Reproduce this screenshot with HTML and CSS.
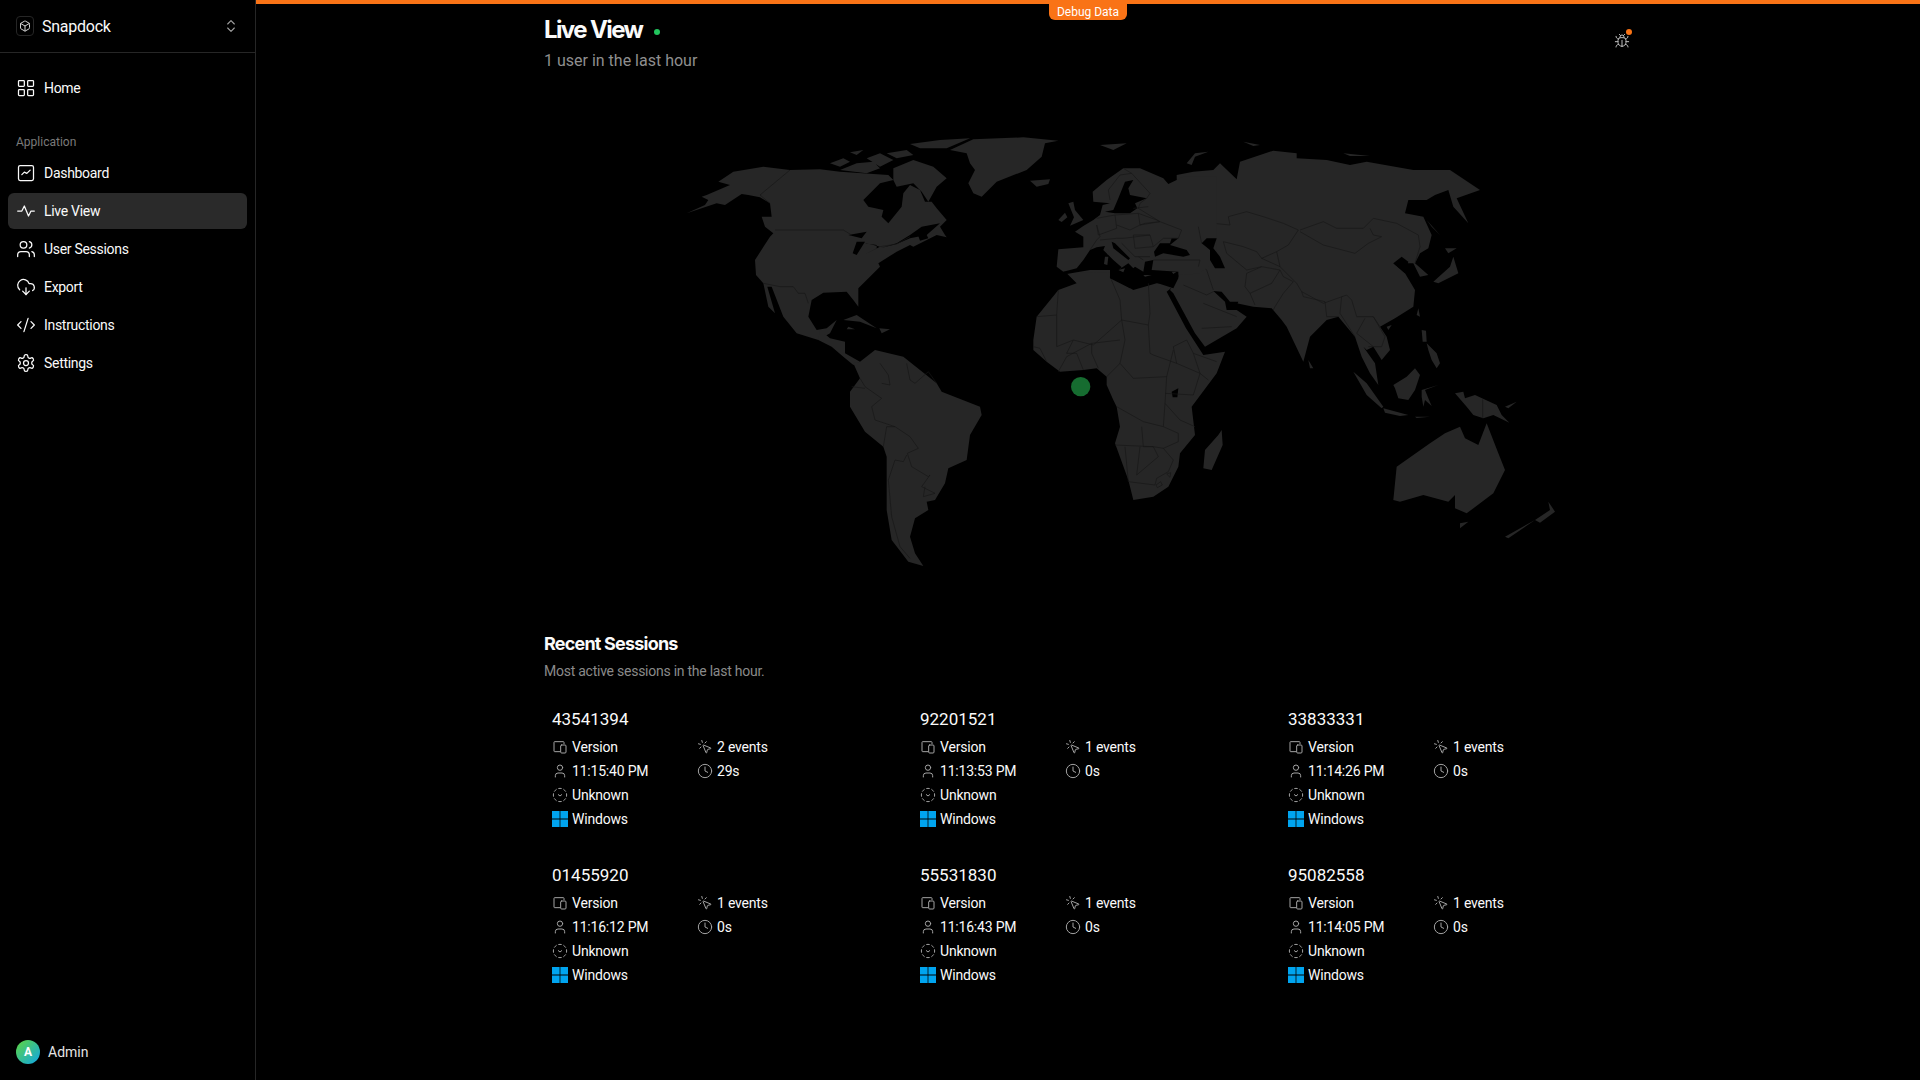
FILE: index.html

```html
<!DOCTYPE html>
<html lang="en">
<head>
    <meta charset="UTF-8">
    <title>Live View - Snapdock</title>
    <link rel="stylesheet" href="styles.css">
</head>
<body>

    <svg class="sprite" xmlns="http://www.w3.org/2000/svg">
        <symbol id="i-box" viewBox="0 0 24 24"><path d="M21 8a2 2 0 0 0-1-1.73l-7-4a2 2 0 0 0-2 0l-7 4A2 2 0 0 0 3 8v8a2 2 0 0 0 1 1.73l7 4a2 2 0 0 0 2 0l7-4A2 2 0 0 0 21 16Z"/><path d="m3.3 7 8.7 5 8.7-5"/><path d="M12 22V12"/></symbol>
        <symbol id="i-updown" viewBox="0 0 24 24"><path d="m7 15 5 5 5-5"/><path d="m7 9 5-5 5 5"/></symbol>
        <symbol id="i-grid" viewBox="0 0 24 24"><rect x="3" y="3" width="7" height="7" rx="1"/><rect x="14" y="3" width="7" height="7" rx="1"/><rect x="14" y="14" width="7" height="7" rx="1"/><rect x="3" y="14" width="7" height="7" rx="1"/></symbol>
        <symbol id="i-chart" viewBox="0 0 24 24"><rect x="3" y="3" width="18" height="18" rx="2"/><path d="m7 14 3-3 3 1.500 4-4"/></symbol>
        <symbol id="i-activity" viewBox="0 0 24 24"><path d="M22 12h-4l-3 6L10 6l-3 6H2"/></symbol>
        <symbol id="i-users" viewBox="0 0 24 24"><path d="M16 21v-2a4 4 0 0 0-4-4H6a4 4 0 0 0-4 4v2"/><circle cx="9" cy="7" r="4"/><path d="M22 21v-2a4 4 0 0 0-3-3.87"/><path d="M16 3.13a4 4 0 0 1 0 7.75"/></symbol>
        <symbol id="i-cloud" viewBox="0 0 24 24"><path d="M12 13v8"/><path d="m8 17 4 4 4-4"/><path d="M4.393 15.269A7 7 0 1 1 15.71 8h1.79a4.5 4.5 0 0 1 2.436 8.284"/></symbol>
        <symbol id="i-code" viewBox="0 0 24 24"><path d="m18 16 4-4-4-4"/><path d="m6 8-4 4 4 4"/><path d="m14.5 4-5 16"/></symbol>
        <symbol id="i-settings" viewBox="0 0 24 24"><path d="M12.22 2h-.44a2 2 0 0 0-2 2v.18a2 2 0 0 1-1 1.73l-.43.25a2 2 0 0 1-2 0l-.15-.08a2 2 0 0 0-2.73.73l-.22.38a2 2 0 0 0 .73 2.73l.15.1a2 2 0 0 1 1 1.72v.51a2 2 0 0 1-1 1.74l-.15.09a2 2 0 0 0-.73 2.73l.22.38a2 2 0 0 0 2.73.73l.15-.08a2 2 0 0 1 2 0l.43.25a2 2 0 0 1 1 1.73V20a2 2 0 0 0 2 2h.44a2 2 0 0 0 2-2v-.18a2 2 0 0 1 1-1.73l.43-.25a2 2 0 0 1 2 0l.15.08a2 2 0 0 0 2.73-.73l.22-.39a2 2 0 0 0-.73-2.73l-.15-.08a2 2 0 0 1-1-1.74v-.5a2 2 0 0 1 1-1.74l.15-.09a2 2 0 0 0 .73-2.73l-.22-.38a2 2 0 0 0-2.73-.73l-.15.08a2 2 0 0 1-2 0l-.43-.25a2 2 0 0 1-1-1.73V4a2 2 0 0 0-2-2z"/><circle cx="12" cy="12" r="3"/></symbol>
        <symbol id="i-bug" viewBox="0 0 24 24"><path d="m8 2 1.88 1.88"/><path d="M14.12 3.88 16 2"/><path d="M9 7.13v-1a3.003 3.003 0 1 1 6 0v1"/><path d="M12 20c-3.3 0-6-2.7-6-6v-3a4 4 0 0 1 4-4h4a4 4 0 0 1 4 4v3c0 3.3-2.7 6-6 6"/><path d="M12 20v-9"/><path d="M6.53 9C4.6 8.8 3 7.1 3 5"/><path d="M6 13H2"/><path d="M3 21c0-2.1 1.700-3.900 3.800-4"/><path d="M20.97 5c0 2.100-1.600 3.800-3.500 4"/><path d="M22 13h-4"/><path d="M17.2 17c2.100.1 3.800 1.900 3.800 4"/></symbol>
        <symbol id="i-devices" viewBox="0 0 24 24"><path d="M18 7V5a1 1 0 0 0-1-1H4a1 1 0 0 0-1 1v13a1 1 0 0 0 1 1h8"/><rect x="13" y="9" width="8" height="12" rx="1.5"/></symbol>
        <symbol id="i-click" viewBox="0 0 24 24"><path d="M14 4.1 12 6"/><path d="m5.1 8-2.9-.8"/><path d="m6 12-1.9 2"/><path d="M7.2 2.2 8 5.1"/><path d="M9.037 9.69a.498.498 0 0 1 .653-.653l11 4.5a.5.5 0 0 1-.074.949l-4.349 1.041a1 1 0 0 0-.74.739l-1.04 4.35a.5.5 0 0 1-.95.074z"/></symbol>
        <symbol id="i-user" viewBox="0 0 24 24"><path d="M19 21v-2a4 4 0 0 0-4-4H9a4 4 0 0 0-4 4v2"/><circle cx="12" cy="7" r="4"/></symbol>
        <symbol id="i-clock" viewBox="0 0 24 24"><circle cx="12" cy="12" r="10"/><path d="M12 6v6l4 2"/></symbol>
        <symbol id="i-unknown" viewBox="0 0 24 24"><path d="M10.1 2.182a10 10 0 0 1 3.8 0"/><path d="M13.9 21.818a10 10 0 0 1-3.8 0"/><path d="M17.609 3.721a10 10 0 0 1 2.69 2.7"/><path d="M2.182 13.9a10 10 0 0 1 0-3.8"/><path d="M20.279 17.609a10 10 0 0 1-2.7 2.69"/><path d="M21.818 10.1a10 10 0 0 1 0 3.8"/><path d="M3.721 6.391a10 10 0 0 1 2.7-2.69"/><path d="M6.391 20.279a10 10 0 0 1-2.69-2.7"/><path d="m9.5 11.5 2.500 2 2.500-2"/></symbol>
        <symbol id="i-windows" viewBox="0 0 16 16"><path class="win" d="M0 0h7.600v7.600H0zM8.400 0H16v7.600H8.400zM0 8.400h7.600V16H0zM8.400 8.400H16V16H8.400z"/></symbol>
    </svg>

    <div class="app">
        <aside class="sidebar">
            <div class="brand">
                <span class="brand-logo"><svg class="icon icon-12"><use href="#i-box"/></svg></span>
                <span class="brand-name">Snapdock</span>
                <svg class="icon brand-switch"><use href="#i-updown"/></svg>
            </div>

            <nav class="nav">
                <a class="nav-item"><svg class="icon"><use href="#i-grid"/></svg>Home</a>
                <div class="nav-label">Application</div>
                <a class="nav-item"><svg class="icon"><use href="#i-chart"/></svg>Dashboard</a>
                <a class="nav-item active"><svg class="icon"><use href="#i-activity"/></svg>Live View</a>
                <a class="nav-item"><svg class="icon"><use href="#i-users"/></svg>User Sessions</a>
                <a class="nav-item"><svg class="icon"><use href="#i-cloud"/></svg>Export</a>
                <a class="nav-item"><svg class="icon"><use href="#i-code"/></svg>Instructions</a>
                <a class="nav-item"><svg class="icon"><use href="#i-settings"/></svg>Settings</a>
            </nav>

            <div class="account">
                <span class="avatar">A</span>
                <span>Admin</span>
            </div>
        </aside>

        <main class="main">
            <div class="debug-bar"></div>
            <div class="debug-tab">Debug Data</div>

            <div class="content">
                <header class="page-head">
                    <div>
                        <h1>Live View <span class="live-dot"></span></h1>
                        <p class="page-sub">1 user in the last hour</p>
                    </div>
                    <span class="bug">
                        <svg class="icon"><use href="#i-bug"/></svg>
                        <span class="bug-dot"></span>
                    </span>
                </header>

                <svg class="map" viewBox="0 0 3312 1560" xmlns="http://www.w3.org/2000/svg">
                    <!-- americas, greenland -->
                    <g transform="translate(408 90)">
                        <path class="land" d="M20 280 75 255 85 240 65 230 80 225 150 195 115 185 160 155 250 140 330 150 420 148 480 155 625 165 640 180 600 190 550 240 565 260 610 270 605 290 625 310 665 260 670 220 690 195 720 210 735 245 755 245 770 265 800 300 780 320 795 345 800 352 770 345 700 380 690 375 650 395 595 430 600 440 535 505 535 560 520 540 500 515 430 518 395 540 385 590 410 630 440 625 470 600 450 640 415 660 350 640 310 590 275 500 262 500 285 580 265 560 250 490 228 465 225 420 270 350 280 340 255 320 245 290 275 290 270 250 240 232 205 225 185 222 135 255 110 250Z"/>
                        <path class="land" d="M450 130 490 115 510 125 480 140ZM510 97 550 90 530 105ZM480 150 530 130 580 125 600 145 560 160ZM560 115 600 100 640 120 600 140ZM690 72 780 60 870 55 800 85 720 85ZM640 145 700 120 760 140 800 175 770 200 745 245 725 215 700 190 650 200 640 180ZM620 100 680 90 700 105 650 115Z"/>
                        <path class="land" d="M810 90 880 58 1030 52 1135 62 1095 70 1085 110 1040 150 950 185 905 230 880 220 865 190 885 150 870 130 860 100Z"/>
                        <path class="land" d="M1050 182 1110 178 1105 192 1070 200Z"/>
                        <path class="land" d="M490 600 530 585 590 625 540 605ZM598 625 630 628 605 640ZM505 620 525 628 500 628Z"/>
                        <path class="sea" d="M505 345 560 335 545 355ZM530 365 555 365 530 405 518 400ZM555 370 590 375 590 385 555 403 600 380 560 370ZM600 385 650 370 690 345 725 320 780 310 740 345 690 355 650 372Z"/>
                        <path class="sea" d="M712 340 735 335 745 355 720 362Z"/>
                        <path class="border" d="M330 150 240 225 270 250M285 330H490L515 345M250 490 300 500 340 500 355 520 375 520 385 550M600 380 650 372 690 350"/>
                    </g>
                    <g transform="translate(828 690)">
                        <path class="land" d="M0 30 30 55 75 65 75 100 120 125 100 135 70 110 35 80-5 60Z"/>
                        <path class="land" d="M100 130 120 125 165 90 250 110 350 190 365 215 480 260 485 285 450 345 440 420 385 445 375 490 345 540 320 545 325 570 285 595 270 650 285 700 310 738 265 725 215 660 200 570 200 410 190 380 135 335 90 260 90 215 120 175Z"/>
                        <path class="border" d="M120 175 135 200 185 235 155 260 165 300 195 310 225 320 270 350 295 385 262 400 275 440 325 470 330 465 305 500 345 520M190 380 200 320 225 320M260 405 250 425 225 420 205 480 215 590 240 680 270 715M185 190 210 195 205 165 180 130M135 205 95 200M260 130 270 180 285 190 325 155 350 190M315 500 310 530 345 520"/>
                        <!-- africa -->
                        <path class="land" d="M740-140 770-110 715-90 650-10 640 60 640 90 680 125 720 155 790 150 830 145 860 170 860 195 880 240 890 260 900 320 885 370 925 480 940 540 1000 530 1045 500 1075 440 1080 400 1125 345 1115 260 1190 160 1215 95 1150 105 1098 25 1040-85 1070-110 1010-110 940-90 870-130 880-150 840-155 780-150Z"/>
                        <path class="land" d="M1205 330 1208 375 1175 450 1150 445 1155 390 1195 345Z"/>
                        <path class="sea" d="M1055 215 1075 205 1072 232 1058 232Z"/>
                        <path class="border" d="M650-10 710-15 715-90M710-15 710 80 760 60 820 75 905 0 900-60 870-130M905 0 985 15 990-20 985-110M985 15 990 100 1000 105 1070 130 1060 80 1100 60 1120 100 1190 125M900 60 815 70 815 100 835 145M815 70 740 110 715 155M760 60 740 100 770 100 790 150M680 125 660 85 640 80M905 0 915 60 900 130 860 170M900 130 940 175 1040 170 1060 90M1040 170 1035 250 1030 320 970 305 890 260M1035 250 1080 300 1125 320M1030 320 1075 340 1075 365 1030 385 1000 380 885 375M965 320 970 380 1000 380 1015 410 950 465 960 380M1030 385 1060 420 1045 455 1010 475 1005 495 925 485 915 380M1120 100 1140 160 1120 225 1035 220M1070 130 1140 160 1165 180"/>
                        <path class="border" d="M1008 495 1022 485 1027 495 1012 503ZM1040 462 1052 458 1050 472Z"/>
                    </g>
                    <!-- asia -->
                    <g transform="translate(1608 90)">
                        <path class="land" d="M290 165 340 155 400 150 420 130 470 178 480 125 580 92 650 100 650 115 740 120 810 135 860 125 1000 150 1110 150 1200 210 1130 235 1165 310 1120 260 1105 210 1065 225 1040 240 985 240 975 280 1030 290 1055 345 1045 385 1020 400 1005 430 1045 465 1020 470 1000 430 960 430 940 430 975 460 1005 510 1000 560 945 595 900 620 920 650 930 690 905 720 880 680 860 690 850 680 885 730 895 795 870 760 845 710 825 650 775 590 740 600 690 650 670 725 620 620 605 600 575 565 520 560 470 550 440 570 400 515 440 570 470 570 500 590 470 625 375 680 345 640 280 520 270 510 295 470 295 452Z"/>
                        <path class="sea" d="M940 430 965 410 985 425 975 460Z"/>
                        <path class="border" d="M355 320 380 308 450 315 445 290 500 275 550 290 610 310 655 330 625 375 590 395 545 415 530 395 490 380 430 365 440 400M660 330 730 305 770 325 850 325 880 295 950 310 1015 345 1020 380 1005 430M660 335 730 375 825 400 865 370 905 350 880 345 870 325M600 440 650 490 665 515 730 550 800 525 815 540 830 590 880 590 900 620M600 450 610 470 640 485 610 520 585 560 580 570M500 460 545 440 600 450 575 490 510 520M360 430 380 450 400 510M500 460 495 500 510 520 525 555M440 400 500 450 545 440M590 395 600 440 545 415M665 515 670 530 735 545 740 590 775 590M785 530 780 580 825 650M855 595 830 640 880 680M880 590 915 650 905 680 865 680M310 495 380 525 400 515M370 550 470 590M365 625 455 620"/>
                        <path class="land" d="M60 75 140 70 100 90ZM490 65 540 75 520 78ZM320 130 345 100 385 95 345 110 335 135ZM790 100 870 108 810 108ZM1040 300 1080 345 1055 320ZM1095 385 1130 385 1105 400ZM1120 410 1135 460 1075 490 1060 485 1110 440ZM685 720 700 745 690 745ZM1015 565 1020 590 1010 585ZM920 620 935 615 925 630Z"/>
                    </g>
                    <!-- europe, middle east -->
                    <g transform="translate(1518 210)">
                        <path class="land" d="M25 268 100 262 100 230 75 215 100 198 130 180 150 165 158 135 180 130 130 125 128 95 170 60 220 25 270 25 340 55 355 72 400 50 500 50 500 300 450 340 400 345 305 340 40 335 20 320Z"/>
                        <path class="land" d="M55 130 70 125 75 150 100 180 60 197 72 172ZM25 180 45 158 52 172 35 186Z"/>
                        <path class="sea" d="M40 335 80 325 100 300 120 270 140 262 165 258 160 270 190 300 215 322 205 330 235 310 250 325 255 320 280 335 285 305 310 300 305 330 385 335 385 355 370 385 310 365 260 375 240 385 180 355 180 330 165 330 120 330 50 342Z"/>
                        <path class="sea" d="M165 155 190 150 205 115 225 65 250 60 235 85 240 105 290 115 255 130 262 145 240 160 195 160ZM185 245 195 250 240 295 235 300 190 265Z"/>
                        <path class="sea" d="M312 275 330 250 360 250 365 235 385 235 360 255 410 270 420 285 400 290 340 280 315 290ZM455 250 470 235 500 235 490 265 510 290 525 325 495 325 480 300 480 270Z"/>
                        <path class="sea" d="M490 393 515 395 540 425 565 425 555 450 530 450 525 425Z"/>
                        <path class="land" d="M205 330 225 325 220 337ZM165 290 175 290 172 315 162 312ZM168 268 176 268 172 285ZM280 345 305 345 285 350ZM365 335 380 335 370 342Z"/>
                        <path class="border" d="M120 270 140 240 150 230 140 195M140 175 195 165 200 205 145 225 140 195M195 165 265 160 270 195 240 210 200 195M265 160 320 180 330 185 285 190 270 195M270 195 330 185 395 210 385 235 340 235 310 260 300 225 250 225M290 115 270 130 265 145 330 185M250 145 295 140M220 25 245 40 300 100 290 115M180 120 175 90 210 45 245 40M150 240 200 235 220 235 300 225M215 250 255 290 300 290M250 225 255 265 310 260M310 300 450 300 445 320M455 250 445 200M265 290 280 300"/>
                    </g>
                    <!-- se asia, oceania -->
                    <g transform="translate(2268 630)">
                        <path class="land" d="M160 215 200 250 250 320 245 325 200 285ZM250 325 325 345 300 348 255 338ZM345 350 390 350 350 354ZM280 255 320 230 345 205 360 225 345 270 325 300 295 295 285 265ZM365 270 415 255 375 270 385 295 395 318 375 300 370 320 365 290ZM365 90 378 92 380 125 368 125ZM380 130 410 160 420 190 410 205 395 180 385 150ZM465 280 490 275 495 295 525 285 590 315 605 345 628 368 580 345 550 355 520 345 500 320ZM615 320 650 305 625 325Z"/>
                        <path class="border" d="M548 298V355"/>
                    </g>
                    <g transform="translate(2508 870)">
                        <path class="land" d="M40 360 50 260 150 190 195 160 240 140 255 175 295 195 320 130 355 220 375 270 340 340 260 400 225 385 225 345 205 365 130 345 60 365Z"/>
                        <path class="land" d="M240 430 265 425 240 445ZM505 365 525 395 480 428 465 420 510 390ZM465 420 385 475 375 470Z"/>
                    </g>
                    <circle class="marker" cx="1610" cy="890" r="29"/>
                </svg>

                <section class="recent">
                    <h2>Recent Sessions</h2>
                    <p class="recent-sub">Most active sessions in the last hour.</p>

                    <div class="sessions">
                        <article class="session">
                            <h3>43541394</h3>
                            <div class="session-info">
                                <div class="info"><svg class="icon"><use href="#i-devices"/></svg>Version</div>
                                <div class="info"><svg class="icon"><use href="#i-click"/></svg>2 events</div>
                                <div class="info"><svg class="icon"><use href="#i-user"/></svg>11:15:40 PM</div>
                                <div class="info"><svg class="icon"><use href="#i-clock"/></svg>29s</div>
                                <div class="info wide"><svg class="icon"><use href="#i-unknown"/></svg>Unknown</div>
                                <div class="info wide"><svg class="icon"><use href="#i-windows"/></svg>Windows</div>
                            </div>
                        </article>
                        <article class="session">
                            <h3>92201521</h3>
                            <div class="session-info">
                                <div class="info"><svg class="icon"><use href="#i-devices"/></svg>Version</div>
                                <div class="info"><svg class="icon"><use href="#i-click"/></svg>1 events</div>
                                <div class="info"><svg class="icon"><use href="#i-user"/></svg>11:13:53 PM</div>
                                <div class="info"><svg class="icon"><use href="#i-clock"/></svg>0s</div>
                                <div class="info wide"><svg class="icon"><use href="#i-unknown"/></svg>Unknown</div>
                                <div class="info wide"><svg class="icon"><use href="#i-windows"/></svg>Windows</div>
                            </div>
                        </article>
                        <article class="session">
                            <h3>33833331</h3>
                            <div class="session-info">
                                <div class="info"><svg class="icon"><use href="#i-devices"/></svg>Version</div>
                                <div class="info"><svg class="icon"><use href="#i-click"/></svg>1 events</div>
                                <div class="info"><svg class="icon"><use href="#i-user"/></svg>11:14:26 PM</div>
                                <div class="info"><svg class="icon"><use href="#i-clock"/></svg>0s</div>
                                <div class="info wide"><svg class="icon"><use href="#i-unknown"/></svg>Unknown</div>
                                <div class="info wide"><svg class="icon"><use href="#i-windows"/></svg>Windows</div>
                            </div>
                        </article>
                        <article class="session">
                            <h3>01455920</h3>
                            <div class="session-info">
                                <div class="info"><svg class="icon"><use href="#i-devices"/></svg>Version</div>
                                <div class="info"><svg class="icon"><use href="#i-click"/></svg>1 events</div>
                                <div class="info"><svg class="icon"><use href="#i-user"/></svg>11:16:12 PM</div>
                                <div class="info"><svg class="icon"><use href="#i-clock"/></svg>0s</div>
                                <div class="info wide"><svg class="icon"><use href="#i-unknown"/></svg>Unknown</div>
                                <div class="info wide"><svg class="icon"><use href="#i-windows"/></svg>Windows</div>
                            </div>
                        </article>
                        <article class="session">
                            <h3>55531830</h3>
                            <div class="session-info">
                                <div class="info"><svg class="icon"><use href="#i-devices"/></svg>Version</div>
                                <div class="info"><svg class="icon"><use href="#i-click"/></svg>1 events</div>
                                <div class="info"><svg class="icon"><use href="#i-user"/></svg>11:16:43 PM</div>
                                <div class="info"><svg class="icon"><use href="#i-clock"/></svg>0s</div>
                                <div class="info wide"><svg class="icon"><use href="#i-unknown"/></svg>Unknown</div>
                                <div class="info wide"><svg class="icon"><use href="#i-windows"/></svg>Windows</div>
                            </div>
                        </article>
                        <article class="session">
                            <h3>95082558</h3>
                            <div class="session-info">
                                <div class="info"><svg class="icon"><use href="#i-devices"/></svg>Version</div>
                                <div class="info"><svg class="icon"><use href="#i-click"/></svg>1 events</div>
                                <div class="info"><svg class="icon"><use href="#i-user"/></svg>11:14:05 PM</div>
                                <div class="info"><svg class="icon"><use href="#i-clock"/></svg>0s</div>
                                <div class="info wide"><svg class="icon"><use href="#i-unknown"/></svg>Unknown</div>
                                <div class="info wide"><svg class="icon"><use href="#i-windows"/></svg>Windows</div>
                            </div>
                        </article>
                    </div>
                </section>
            </div>
        </main>
    </div>

</body>
</html>
```

FILE: styles.css

```css
* {
    box-sizing: border-box;
}

html, body {
    height: 100%;
}

body {
    margin: 0;
    background: #000;
    color: #fafafa;
    font-family: Roboto, "Liberation Sans", sans-serif;
    font-size: 14px;
    overflow: hidden;
}

.sprite {
    display: none;
}

.icon {
    width: 16px;
    height: 16px;
    flex: none;
    fill: none;
    stroke: currentColor;
    stroke-width: 2;
    stroke-linecap: round;
    stroke-linejoin: round;
}

.icon-12 {
    width: 12px;
    height: 12px;
}

.win {
    fill: #00a4ef;
    stroke: none;
}

.app {
    display: flex;
    height: 100%;
}

/* sidebar */
.sidebar {
    width: 256px;
    flex: none;
    display: flex;
    flex-direction: column;
    border-right: 1px solid #262626;
}

.brand {
    display: flex;
    align-items: center;
    height: 53px;
    padding: 0 16px;
    border-bottom: 1px solid #262626;
}

.brand-logo {
    width: 18px;
    height: 20px;
    margin-right: 8px;
    display: flex;
    align-items: center;
    justify-content: center;
    border: 1px solid #262626;
    border-radius: 4px;
    color: #d4d4d4;
}

.brand-name {
    flex: 1;
    font-size: 16px;
    letter-spacing: -.25px;
}

.brand-switch {
    color: #a3a3a3;
    stroke-width: 1.600;
}

.nav {
    flex: 1;
    padding: 17px 8px 0;
}

.nav-item {
    display: flex;
    align-items: center;
    gap: 8px;
    height: 36px;
    margin-bottom: 2px;
    padding: 0 8px;
    border-radius: 6px;
    letter-spacing: -.3px;
}

.nav-item .icon {
    width: 20px;
    height: 20px;
    stroke-width: 1.500;
}

.nav-item.active {
    background: #2a2a2a;
}

.nav-label {
    margin: 26px 8px 0;
    height: 23px;
    font-size: 12px;
    line-height: 20px;
    color: #7a7a7a;
}

.account {
    display: flex;
    align-items: center;
    gap: 8px;
    padding: 0 16px 16px;
    color: #e5e5e5;
}

.avatar {
    width: 24px;
    height: 24px;
    display: flex;
    align-items: center;
    justify-content: center;
    border-radius: 50%;
    background: linear-gradient(135deg, #5fd63c, #0ea5e9);
    color: #fff;
    font-size: 12px;
    font-weight: 700;
}

/* main */
.main {
    position: relative;
    flex: 1;
    min-width: 0;
}

.debug-bar {
    height: 4px;
    background: #f97316;
}

.debug-tab {
    position: absolute;
    top: 4px;
    left: 50%;
    width: 78px;
    height: 16px;
    margin-left: -39px;
    border-radius: 0 0 6px 6px;
    background: #f97316;
    color: #fff;
    font-size: 12px;
    line-height: 17px;
    text-align: center;
}

.content {
    width: 1104px;
    margin-left: 288px;
}

.page-head {
    display: flex;
    justify-content: space-between;
    padding: 10px 18px 0 0;
    height: 86px;
}

h1 {
    margin: 0;
    font-family: Inter, sans-serif;
    font-size: 24px;
    font-weight: 700;
    line-height: 32px;
    letter-spacing: -1.6px;
}

.live-dot {
    display: inline-block;
    width: 6px;
    height: 6px;
    margin: 0 0 3px 7px;
    border-radius: 50%;
    background: #22c55e;
}

.page-sub {
    margin: 3px 0 0;
    font-size: 16px;
    line-height: 24px;
    color: #8f8f8f;
}

.bug {
    position: relative;
    margin-top: 19px;
    height: 16px;
    color: #bdbdbd;
}

.bug .icon {
    stroke-width: 1.500;
}

.bug-dot {
    position: absolute;
    top: -4px;
    right: -2px;
    width: 6px;
    height: 6px;
    border-radius: 50%;
    background: #f97316;
}

.map {
    display: block;
    width: 1104px;
    height: 520px;
}

.land {
    fill: #262626;
}

.sea {
    fill: #000;
}

.border {
    fill: none;
    stroke: #161616;
    stroke-width: 2;
}

.marker {
    fill: #166c30;
}

/* sessions */
.recent {
    margin-top: 20px;
}

h2 {
    margin: 0;
    font-family: Inter, sans-serif;
    font-size: 18px;
    font-weight: 700;
    line-height: 28px;
    letter-spacing: -.8px;
}

.recent-sub {
    margin: 3px 0 0;
    line-height: 20px;
    color: #8a8a8a;
    letter-spacing: -.25px;
}

.sessions {
    display: grid;
    grid-template-columns: repeat(3, 368px);
    margin-top: 16px;
}

.session {
    height: 156px;
    padding: 8px;
}

h3 {
    margin: 0 0 2px;
    font-size: 17px;
    font-weight: 400;
    line-height: 28px;
}

.session-info {
    display: grid;
    grid-template-columns: 145px 1fr;
    grid-auto-rows: 24px;
}

.info {
    display: flex;
    align-items: center;
    gap: 4px;
    font-size: 14px;
    letter-spacing: -.2px;
}

.info .icon {
    color: #a3a3a3;
    stroke-width: 1.500;
}

.wide {
    grid-column: 1 / -1;
}
```
